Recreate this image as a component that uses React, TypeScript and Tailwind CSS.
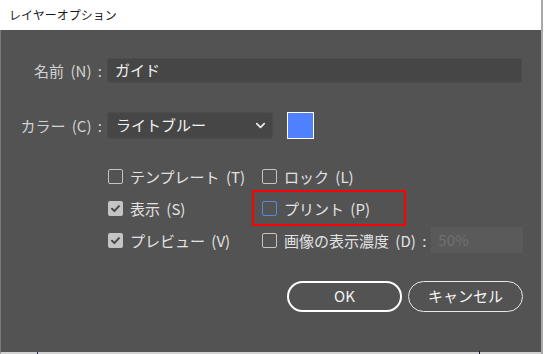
import { ChevronDown } from "lucide-react"

const font = "font-['Noto_Sans_CJK_JP','Noto_Sans',sans-serif]"

function Box({ checked, focus }: { checked?: boolean; focus?: boolean }) {
  if (checked) {
    return (
      <span className="flex h-[15px] w-[15px] shrink-0 items-center justify-center rounded-[2px] bg-[#c4c4c4]">
        <svg width="11" height="11" viewBox="0 0 12 12" fill="none">
          <path d="M2.2 6.3 L4.8 8.8 L9.8 3.4" stroke="#4a4a4a" strokeWidth="2.2" strokeLinecap="round" strokeLinejoin="round" />
        </svg>
      </span>
    )
  }
  return (
    <span
      className={
        focus
          ? "h-[15px] w-[15px] shrink-0 rounded-[2px] border border-[#4b8fdc]"
          : "h-[15px] w-[15px] shrink-0 rounded-[2px] border border-[#c4c4c4]"
      }
    />
  )
}

function Check({ label, checked, focus }: { label: string; checked?: boolean; focus?: boolean }) {
  return (
    <div className="flex items-center gap-[7px]">
      <Box checked={checked} focus={focus} />
      <span className="whitespace-nowrap text-[15px] leading-none text-[#e2e2e2] [word-spacing:3px]">{label}</span>
    </div>
  )
}

export default function App() {
  return (
    <div className={`relative flex h-[354px] w-[545px] overflow-hidden bg-white ${font}`}>
      <div className="flex w-[543px] flex-col border-r-2 border-[#a8a8a8]">
        {/* title bar */}
        <div className="flex h-[30px] shrink-0 items-center bg-white pl-[9px] text-[12px] text-[#1a1a1a]">
          レイヤーオプション
        </div>

        {/* body */}
        <div className="flex flex-1 flex-col border-b-2 border-l border-b-[#d2d2d2] border-l-[#7a7a7a] bg-[#535353]">
          <div className="mt-[28px] flex h-[25px] items-center">
            <div className="w-[106px] whitespace-nowrap pr-[5px] text-right text-[15px] leading-none text-[#d2d2d2] [word-spacing:3px]">名前 (N) :</div>
            <div className="flex h-[25px] w-[415px] items-center rounded-[3px] border border-[#4c4c4c] bg-[#464646] pl-[7px] text-[15px] text-[#f2f2f2]">
              ガイド
            </div>
          </div>

          <div className="mt-[29px] flex h-[27px] items-center">
            <div className="w-[106px] whitespace-nowrap pr-[5px] text-right text-[15px] leading-none text-[#d2d2d2] [word-spacing:3px]">カラー (C) :</div>
            <div className="flex h-[27px] w-[166px] items-center justify-between rounded-[3px] border border-[#4c4c4c] bg-[#464646] pl-[8px] pr-[4px] text-[15px] text-[#f2f2f2]">
              <span>ライトブルー</span>
              <ChevronDown size={15} strokeWidth={2.6} className="text-[#eeeeee]" />
            </div>
            <div className="ml-[14px] h-[27px] w-[27px] border border-white bg-[#4f81ff]" />
          </div>

          <div className="mt-[21px] grid grid-cols-[154px_261px] pl-[107px]">
            <div className="flex h-[32px] items-center">
              <Check label="テンプレート (T)" />
            </div>
            <div className="flex h-[32px] items-center">
              <Check label="ロック (L)" />
            </div>
            <div className="flex h-[32px] items-center">
              <Check label="表示 (S)" checked />
            </div>
            <div className="flex h-[32px] items-center">
              <Check label="プリント (P)" focus />
            </div>
            <div className="flex h-[32px] items-center">
              <Check label="プレビュー (V)" checked />
            </div>
            <div className="flex h-[32px] items-center">
              <Check label="画像の表示濃度 (D) :" />
              <div className="ml-[5px] flex h-[26px] flex-1 items-center bg-[#5a5a5a] pl-[7px] text-[15px] text-[#707070]">
                50%
              </div>
            </div>
          </div>

          <div className="mt-[25px] flex gap-[6px] pl-[286px]">
            <button className="flex h-[31px] w-[115px] items-center justify-center rounded-full border-2 border-white text-[15px] text-[#f4f4f4]">
              OK
            </button>
            <button className="flex h-[31px] w-[115px] items-center justify-center rounded-full border-[1.5px] border-[#e8e8e8] text-[15px] text-[#f4f4f4]">
              キャンセル
            </button>
          </div>
        </div>
      </div>

      {/* annotation */}
      <div className="absolute left-[252px] top-[190px] h-[36px] w-[154px] border-2 border-[#ff0000]" />
      {/* stray marks along bottom edge */}
      <div className="absolute left-[37px] top-[352px] h-[2px] w-[1px] bg-[#1a2a6a]" />
      <div className="absolute left-[479px] top-[351px] h-[3px] w-[1px] bg-[#1a1a3a]" />
    </div>
  )
}
